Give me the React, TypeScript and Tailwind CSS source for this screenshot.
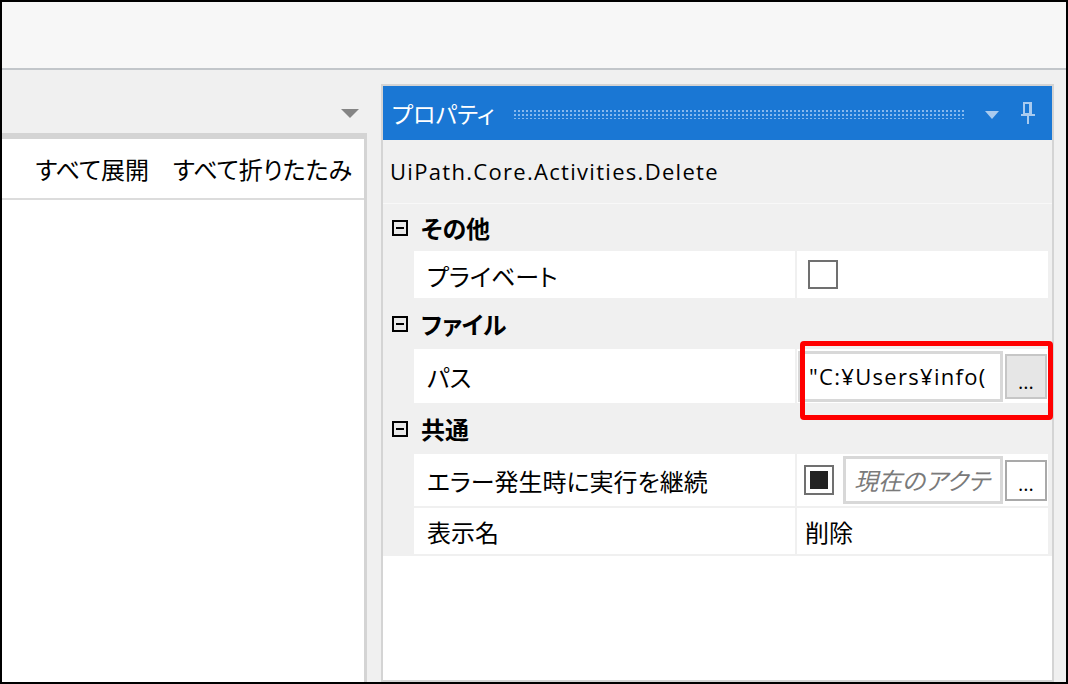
import React from 'react';

const jp = "font-['Noto_Sans_CJK_JP',sans-serif] [font-feature-settings:'palt']";
const latin = "font-['Open_Sans','Noto_Sans_CJK_JP',sans-serif]";

const CollapseBox = () => (
  <div className="w-[16px] h-[16px] border-2 border-black bg-[#e8e8e8] flex items-center justify-center shrink-0">
    <div className="w-[8px] h-[2px] bg-black" />
  </div>
);

const Category = ({ title, h }: { title: string; h: string }) => (
  <div className={`flex items-center ${h}`}>
    <div className="w-[31px] flex justify-center pl-[2px]">
      <CollapseBox />
    </div>
    <span className={`${jp} text-[24px] font-bold text-black ml-[7px]`}>{title}</span>
  </div>
);

const PropRow = ({
  name,
  h,
  children,
  gap = true,
}: {
  name: string;
  h: string;
  children?: React.ReactNode;
  gap?: boolean;
}) => (
  <div className={`flex ml-[31px] mr-[4px] ${gap ? 'mb-[2px]' : ''}`}>
    <div className={`w-[381px] bg-white flex items-center pl-[13px] pt-[2px] ${h}`}>
      <span className={`${jp} text-[24px] text-black`}>{name}</span>
    </div>
    <div className={`relative flex-1 ml-[2px] bg-white flex items-center ${h}`}>{children}</div>
  </div>
);

const DotsButton = ({ cls }: { cls: string }) => (
  <div className={`w-[42px] border-2 flex items-end justify-center pb-[5px] shrink-0 ${cls}`}>
    <span className={`${latin} text-[20px] leading-none text-black`}>...</span>
  </div>
);

export default function App() {
  return (
    <div className="w-[1068px] h-[684px] border-2 border-black bg-[#f0f0f0] flex flex-col overflow-hidden">
      {/* window top strip */}
      <div className="h-[66px] bg-[#f7f7f7] shrink-0" />
      <div className="h-[2px] bg-[#c2c6ca] shrink-0" />

      <div className="flex flex-1 min-h-0">
        {/* left panel */}
        <div className="w-[365px] flex flex-col shrink-0">
          <div className="h-[63px] flex items-end justify-end pr-[8px] pb-[15px]">
            <svg width="18" height="9" viewBox="0 0 18 9">
              <polygon points="0,0 18,0 9,9" fill="#858585" />
            </svg>
          </div>
          <div className="flex-1 bg-white border-t-[6px] border-r-[3px] border-[#d4d4d4] flex flex-col">
            <div className="h-[61px] border-b-2 border-[#dcdcdc] flex items-center justify-end pr-[12px] gap-[24px]">
              <span className={`${jp} text-[24px] text-black`}>すべて展開</span>
              <span className={`${jp} text-[24px] text-black`}>すべて折りたたみ</span>
            </div>
          </div>
        </div>

        {/* properties panel */}
        <div className="ml-[14px] mt-[14px] w-[673px] border-2 border-[#d4d4d4] flex flex-col shrink-0">
          <div className="h-[54px] bg-[#1a77d4] flex items-center pl-[9px] pr-[16px] shrink-0">
            <span className={`${jp} text-[23px] text-white`}>プロパティ</span>
            <div className="flex-1 ml-[18px] mr-[20px] h-[10px] mt-[2px] bg-[radial-gradient(circle,#86b9ee_1px,transparent_1.3px)] bg-[length:4px_4px]" />
            <svg width="14" height="8" viewBox="0 0 14 8" className="mt-[3px]">
              <polygon points="0,0 14,0 7,8" fill="#a9cbef" />
            </svg>
            <svg width="16" height="22" viewBox="0 0 16 22" className="ml-[21px]">
              <rect x="4" y="1" width="7" height="11" fill="none" stroke="#a9cbef" strokeWidth="2" />
              <rect x="9" y="1" width="3" height="11" fill="#a9cbef" />
              <rect x="1" y="12" width="14" height="2" fill="#a9cbef" />
              <rect x="7" y="13" width="2" height="9" fill="#a9cbef" />
            </svg>
          </div>

          <div className="h-[64px] flex items-center pl-[7px] border-b border-[#f8f8f8] shrink-0">
            <span className={`${latin} text-[22px] text-black tracking-[1.3px]`}>UiPath.Core.Activities.Delete</span>
          </div>

          <div className="flex-1 bg-white flex flex-col">
            <div className="bg-[#f0f0f0] pb-[2px]">
              <Category title="その他" h="h-[47px]" />
              <PropRow name="プライベート" h="h-[47px]" gap={false}>
                <div className="ml-[11px] w-[30px] h-[29px] border-2 border-[#707070] bg-white" />
              </PropRow>

              <Category title="ファイル" h="h-[51px]" />
              <PropRow name="パス" h="h-[54px]" gap={false}>
                <div className="ml-[1px] w-[205px] h-[51px] border-[3px] border-[#d8d8d8] bg-white flex items-center pl-[8px] overflow-hidden">
                  <span className={`${latin} text-[22px] text-black whitespace-nowrap tracking-[1.3px]`}>"C:¥Users¥info(</span>
                </div>
                <DotsButton cls="ml-[2px] h-[45px] bg-[#e6e6e6] border-[#c6c6c6]" />
                <div className="absolute left-[3px] -top-[8px] w-[253px] h-[79px] border-[5px] border-[#ff0000] rounded-[4px]" />
              </PropRow>

              <Category title="共通" h="h-[51px]" />
              <PropRow name="エラー発生時に実行を継続" h="h-[52px]">
                <div className="ml-[7px] w-[30px] h-[30px] border-2 border-[#707070] bg-white flex items-center justify-center shrink-0">
                  <div className="w-[18px] h-[18px] bg-[#222222]" />
                </div>
                <div className="ml-[9px] w-[160px] h-[48px] border-[3px] border-[#d8d8d8] bg-white flex items-center pl-[8px] overflow-hidden">
                  <span className={`${jp} text-[24px] italic text-[#7a7a7a] whitespace-nowrap`}>現在のアクテ</span>
                </div>
                <DotsButton cls="ml-[2px] h-[41px] bg-white border-[#a9a9a9]" />
              </PropRow>
              <PropRow name="表示名" h="h-[46px]" gap={false}>
                <span className={`${jp} text-[24px] text-black ml-[8px] pt-[2px]`}>削除</span>
              </PropRow>
            </div>
          </div>
        </div>
      </div>
    </div>
  );
}
